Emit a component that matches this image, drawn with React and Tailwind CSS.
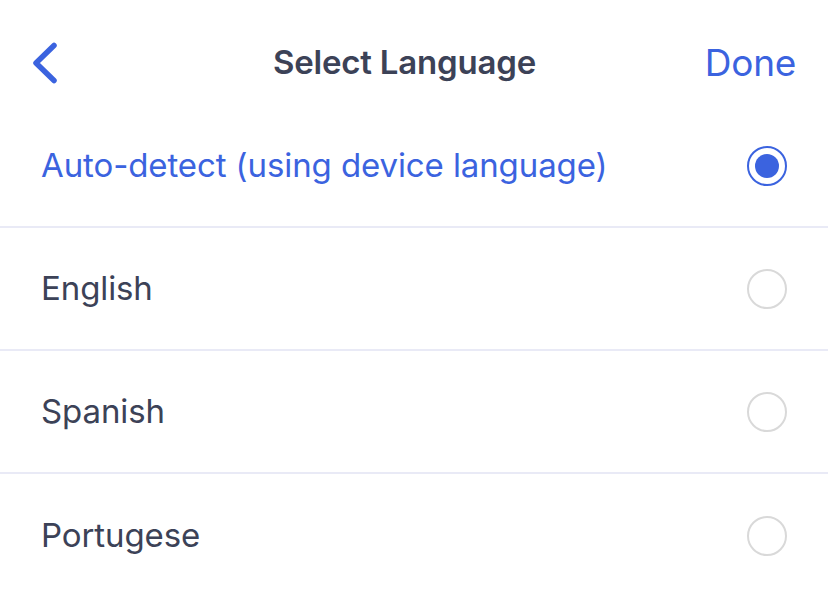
const languages = [
  { label: "Auto-detect (using device language)", selected: true },
  { label: "English" },
  { label: "Spanish" },
  { label: "Portugese" },
];

function Radio({ selected }) {
  if (selected) {
    return (
      <div className="w-[40px] h-[40px] rounded-full border-2 border-[#3b63df] flex items-center justify-center">
        <div className="w-[24px] h-[24px] rounded-full bg-[#3b63df]" />
      </div>
    );
  }
  return <div className="w-[40px] h-[40px] rounded-full border-2 border-[#d9d9d9]" />;
}

export default function App() {
  return (
    <div
      className="w-[828px] h-[595px] bg-white overflow-hidden"
      style={{ fontFamily: "Inter, 'Noto Sans', sans-serif" }}
    >
      {/* Header */}
      <div className="h-[105px] flex items-center justify-between pl-[31px] pr-[32px] pt-[20px]">
        <button className="w-[92px] h-[42px] flex items-center">
          <svg width="27" height="42" viewBox="0 0 27 42" fill="none">
            <path
              d="M23 3.5 L5 21 L23 38.5"
              stroke="#3b63df"
              strokeWidth="5.5"
              strokeLinecap="round"
              strokeLinejoin="round"
            />
          </svg>
        </button>
        <h1 className="text-[33px] font-semibold text-[#3c4257] tracking-[-0.2px]">Select Language</h1>
        <button className="text-[37px] text-[#3b63df] w-[110px] text-right tracking-[-0.3px]">Done</button>
      </div>

      {/* List */}
      <div className="flex flex-col">
        {languages.map((lang, i) => (
          <div
            key={lang.label}
            className={
              "h-[123px] flex items-center justify-between pl-[41px] pr-[41px] " +
              (i < languages.length - 1 ? "border-b-2 border-[#e9eaf6]" : "")
            }
          >
            <span
              className={
                "text-[33px] tracking-[-0.1px] " +
                (lang.selected ? "text-[#3b63df]" : "text-[#3c4257]")
              }
            >
              {lang.label}
            </span>
            <Radio selected={lang.selected} />
          </div>
        ))}
      </div>
    </div>
  );
}
